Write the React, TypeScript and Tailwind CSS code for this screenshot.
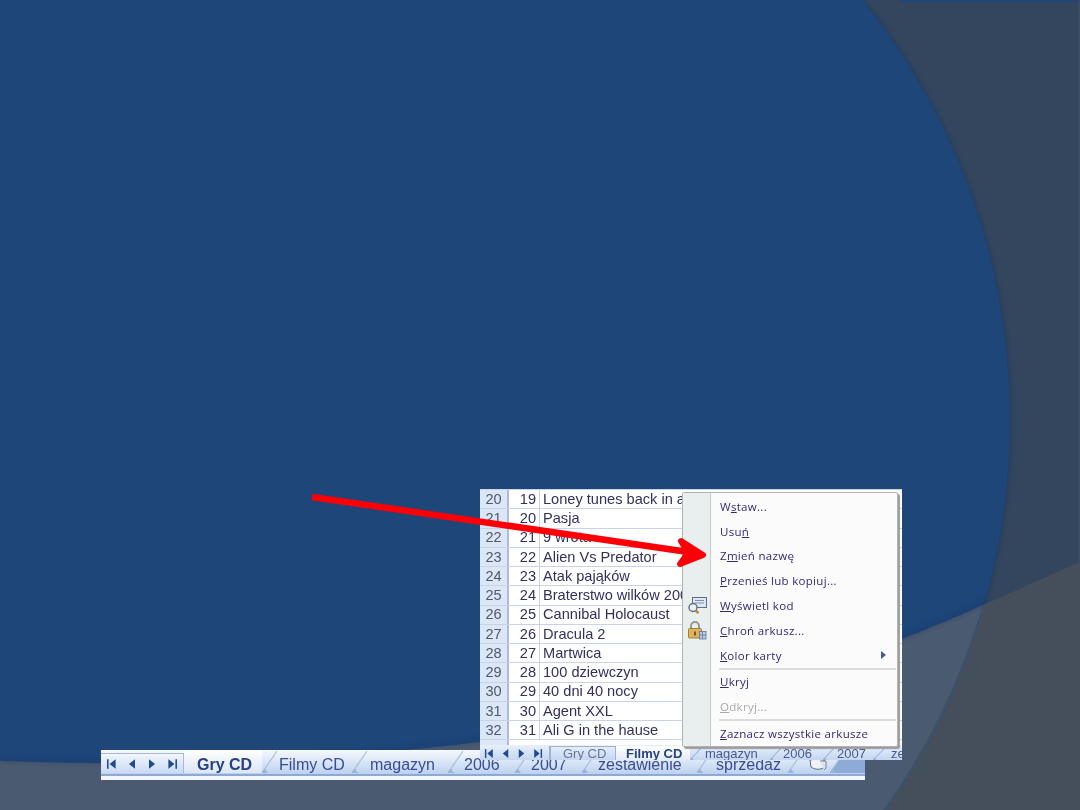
import type { ReactNode } from "react";

const rows: [number, number, string][] = [
  [20, 19, "Loney tunes back in action"],
  [21, 20, "Pasja"],
  [22, 21, "9 wrota"],
  [23, 22, "Alien Vs Predator"],
  [24, 23, "Atak pająków"],
  [25, 24, "Braterstwo wilków 2009"],
  [26, 25, "Cannibal Holocaust"],
  [27, 26, "Dracula 2"],
  [28, 27, "Martwica"],
  [29, 28, "100 dziewczyn"],
  [30, 29, "40 dni 40 nocy"],
  [31, 30, "Agent XXL"],
  [32, 31, "Ali G in the hause"],
];

function Nav({ size, gap }: { size: number; gap: string }) {
  const c = "#1f4a8c";
  return (
    <div className={`flex items-center ${gap}`}>
      <svg width={size} height={size} viewBox="0 0 10 10"><path d="M1.5 1v8" stroke={c} strokeWidth="1.3" /><path d="M8 1v8L3 5z" fill={c} /></svg>
      <svg width={size} height={size} viewBox="0 0 10 10"><path d="M7.5 1v8L2.5 5z" fill={c} /></svg>
      <svg width={size} height={size} viewBox="0 0 10 10"><path d="M2.5 1v8l5-4z" fill={c} /></svg>
      <svg width={size} height={size} viewBox="0 0 10 10"><path d="M8.5 1v8" stroke={c} strokeWidth="1.3" /><path d="M2 1v8l5-4z" fill={c} /></svg>
    </div>
  );
}

function Slant({ w, h, end }: { w: number; h: number; end?: boolean }) {
  const t = h * 0.2;
  return (
    <svg width={w} height={h} viewBox={`0 0 ${w} ${h}`} className="shrink-0">
      {end && <path d={`M0 ${h} L${w} 0 L${w} ${h} Z`} fill="#8eaad6" />}
      <path d={`M0 ${h} L${w} 1`} stroke="#a9bddd" strokeWidth="1.2" fill="none" />
      <path d={`M-1 ${h} L${t * 1.3} ${h} L${t * 0.6} ${h - t} Z`} fill="#9db3d8" />
    </svg>
  );
}

function Tab({ w, pl, children, cls }: { w: string; pl: string; children: ReactNode; cls?: string }) {
  return <div className={`${w} ${pl} ${cls ?? ""} flex items-center whitespace-nowrap shrink-0`}>{children}</div>;
}

function MenuItem({ pre, u, post, disabled, arrow, h }: { pre?: string; u: string; post?: string; disabled?: boolean; arrow?: boolean; h: string }) {
  return (
    <div className={`flex items-center justify-between pl-[37px] pr-[11px] ${h} ${disabled ? "text-[#a9a9ad]" : "text-[#33297a]"}`}>
      <span>{pre}<u>{u}</u>{post}</span>
      {arrow && <span className="w-0 h-0 border-y-[4px] border-y-transparent border-l-[5px] border-l-[#4a5a8a]" />}
    </div>
  );
}

export default function App() {
  return (
    <div className="relative w-[1080px] h-[810px] overflow-hidden bg-[#34465e] font-['Liberation_Sans',Arial,sans-serif]">
      <svg className="absolute inset-0" width="1080" height="810" viewBox="0 0 1080 810">
        <defs>
          <filter id="soft" x="-5%" y="-5%" width="110%" height="110%"><feGaussianBlur stdDeviation="2" /></filter>
          <clipPath id="lowClip"><path d="M0 761 C300 772 640 745 902 639 C960 617 1020 588 1080 562 L1080 810 L0 810 Z" /></clipPath>
          <clipPath id="circClip"><circle cx="338" cy="420" r="672" /></clipPath>
        </defs>
        <rect x="900" y="0" width="180" height="2" fill="#1f4679" />
        <rect x="1078" y="0" width="2" height="562" fill="#3a4c68" />
        <circle cx="338" cy="420" r="673" fill="#16365f" opacity="0.6" filter="url(#soft)" />
        <circle cx="338" cy="420" r="672" fill="#1e4679" />
        <g clipPath="url(#lowClip)">
          <rect x="0" y="540" width="1080" height="270" fill="#454f5c" />
          <circle cx="338" cy="420" r="672" fill="#4a5a70" />
          <circle cx="338" cy="420" r="672" fill="none" stroke="#3e5066" strokeWidth="3" />
        </g>
        <path d="M0 759 C300 770 640 743 902 637 C960 615 1020 586 1080 560" fill="none" stroke="#18396a" strokeWidth="3" opacity="0.55" filter="url(#soft)" clipPath="url(#circClip)" />
      </svg>

      {/* first picture: sheet tabs */}
      <div className="absolute left-[101px] top-[750px] w-[764px] h-[30px] flex flex-col bg-white text-[#3a4c92] text-[16px] leading-none blur-[0.3px]">
        <div className="h-[24px] flex items-stretch bg-gradient-to-b from-[#f6f9fe] to-[#bdd1ef] overflow-hidden pb-[1px]">
          <div className="w-[83px] pl-[5px] flex items-center border-r border-t border-[#a9bad6] mt-[3px] bg-gradient-to-b from-[#f2f6fd] to-[#c9daf3] shrink-0">
            <Nav size={12} gap="gap-[8px]" />
          </div>
          <Tab w="w-[78px]" pl="pl-[13px] pt-[6px]" cls="bg-gradient-to-b from-white to-[#dbe6f7] font-bold text-[#27407f]">Gry CD</Tab>
          <Slant w={15} h={23} />
          <Tab w="w-[75px]" pl="pl-[2px] pt-[6px]">Filmy CD</Tab>
          <Slant w={15} h={23} />
          <Tab w="w-[81px]" pl="pl-[3px] pt-[6px]">magazyn</Tab>
          <Slant w={15} h={23} />
          <Tab w="w-[52px]" pl="pl-[1px] pt-[6px]">2006</Tab>
          <Slant w={15} h={23} />
          <Tab w="w-[52px]" pl="pl-[1px] pt-[6px]">2007</Tab>
          <Slant w={15} h={23} />
          <Tab w="w-[100px]" pl="pl-[1px] pt-[6px]">zestawienie</Tab>
          <Slant w={15} h={23} />
          <Tab w="w-[76px]" pl="pl-[4px] pt-[6px]">sprzedaż</Tab>
          <Slant w={15} h={23} />
          <Tab w="w-[27px]" pl="pl-[5px] pt-[5px]">
            <svg width="20" height="18" viewBox="0 0 20 18">
              <path d="M2 5 C6 4 13 4 16 5 L17 12 C13 15 7 15 3 12z" fill="#eef2f8" stroke="#5a6a80" strokeWidth="1" />
              <path d="M12 6h6v7l-2 2" fill="#dde3ee" stroke="#5a6a80" strokeWidth="0.8" />
              <path d="M5 0l3 2 3-2-1 5H6z" fill="#e89a2c" />
            </svg>
          </Tab>
          <Slant w={15} h={23} end />
          <div className="flex-1 bg-[#8eaad6]" />
        </div>
        <div className="h-[2px] bg-[#8ea9d3]" />
        <div className="flex-1 bg-[#f3f6fb]" />
      </div>

      {/* second picture: sheet with context menu */}
      <div className="absolute left-[480px] top-[489px] w-[422px] h-[271px] bg-white overflow-hidden flex flex-col text-[14.6px] leading-none text-[#33305c] blur-[0.3px]">
        <div className="h-px bg-[#c7d3e8]" />
        {rows.map(([r, n, t]) => (
          <div key={r} className="h-[19.25px] flex border-b border-[#c7d3e8] shrink-0">
            <div className="w-[29px] flex items-center justify-center bg-[#dde6f4] border-r-2 border-[#a9bcd9] text-[#4a5a72] shrink-0">{r}</div>
            <div className="w-[31px] flex items-center justify-end pr-[3px] border-r border-[#c7d3e8] shrink-0">{n}</div>
            <div className="pl-[3px] flex items-center whitespace-nowrap">{t}</div>
          </div>
        ))}
        <div className="h-[5px] flex shrink-0">
          <div className="w-[29px] bg-[#dde6f4] border-r-2 border-[#a9bcd9]" />
        </div>
        <div className="flex-1 flex items-stretch bg-gradient-to-b from-[#e8f0fb] to-[#c4d6f1] text-[13px] text-[#4a5a8c] overflow-hidden pt-[1px]">
          <div className="w-[70px] pl-[4px] flex items-center border-r border-[#9fb2d0] shrink-0">
            <Nav size={11} gap="gap-[5px]" />
          </div>
          <Tab w="w-[66px]" pl="pl-[12px]" cls="border-x border-t border-[#9fb2d0] text-[#6a7690]">Gry CD</Tab>
          <Tab w="w-[74px]" pl="pl-[10px]" cls="bg-gradient-to-b from-white to-[#e4ecf8] font-bold text-[#27407f]">Filmy CD</Tab>
          <Slant w={12} h={14} />
          <Tab w="w-[68px]" pl="pl-[3px]">magazyn</Tab>
          <Slant w={12} h={14} />
          <Tab w="w-[41px]" pl="pl-[1px]">2006</Tab>
          <Slant w={12} h={14} />
          <Tab w="w-[38px]" pl="pl-[2px]">2007</Tab>
          <Slant w={13} h={14} />
          <Tab w="w-[16px]" pl="pl-[5px]">ze</Tab>
        </div>

        <div className="absolute left-[202px] top-[3px] w-[216px] h-[255px] flex bg-[#fbfbfb] border border-[#b0b2b4] rounded-[2px] shadow-[2px_2px_1px_#9a9c9e] font-['Open_Sans',sans-serif] text-[11.5px] tracking-[0.3px]">
          <div className="w-[28px] bg-[#e9eeee] border-r border-[#c5cbcb] shrink-0 flex flex-col items-center pt-[103px] gap-[7px]">
            <svg width="20" height="18" viewBox="0 0 20 18">
              <rect x="5.5" y="1.5" width="14" height="10" fill="#dfe6f0" stroke="#5a6f8c" />
              <path d="M8 4.5h9M8 7h9" stroke="#7e90a8" />
              <circle cx="6" cy="11.5" r="4" fill="#e8f0f8" stroke="#5e6f80" strokeWidth="1.4" />
              <path d="M8.5 14.5l3 2.5" stroke="#c08a30" strokeWidth="2.4" />
            </svg>
            <svg width="20" height="19" viewBox="0 0 20 19">
              <path d="M4 8V5a4 4 0 0 1 8 0v3" fill="none" stroke="#9a9a8c" strokeWidth="2" />
              <rect x="1.5" y="7.5" width="13" height="9.5" rx="1" fill="#e0b45c" stroke="#a57e30" />
              <rect x="7" y="10.5" width="2" height="4" fill="#7a5a20" />
              <rect x="12.5" y="10.5" width="6.5" height="7.5" fill="#b9c9df" stroke="#5f7698" strokeWidth="0.8" />
              <path d="M15.5 10.5v7.5M12.5 14h6.5" stroke="#5f7698" strokeWidth="0.7" />
            </svg>
          </div>
          <div className="flex-1 -ml-[28px] flex flex-col pt-[1px]">
            <MenuItem h="h-[24.85px]" pre="W" u="s" post="taw..." />
            <MenuItem h="h-[24.85px]" pre="Usu" u="ń" />
            <MenuItem h="h-[24.85px]" pre="Z" u="m" post="ień nazwę" />
            <MenuItem h="h-[24.85px]" u="P" post="rzenieś lub kopiuj..." />
            <MenuItem h="h-[24.85px]" u="W" post="yświetl kod" />
            <MenuItem h="h-[24.85px]" u="C" post="hroń arkusz..." />
            <MenuItem h="h-[24.85px]" u="K" post="olor karty" arrow />
            <div className="h-[2px] ml-[36px] mr-[1px] bg-[#dcdcdc] shrink-0" />
            <MenuItem h="h-[24px]" u="U" post="kryj" />
            <MenuItem h="h-[25px]" u="O" post="dkryj..." disabled />
            <div className="h-[2px] ml-[36px] mr-[1px] bg-[#dcdcdc] shrink-0" />
            <MenuItem h="h-[25px]" u="Z" post="aznacz wszystkie arkusze" />
          </div>
        </div>
      </div>

      {/* arrow */}
      <svg className="absolute inset-0 pointer-events-none" width="1080" height="810" viewBox="0 0 1080 810">
        <path d="M312 497 L695 553" stroke="#fb0006" strokeWidth="6.5" fill="none" />
        <path d="M681 541 L703 555 L680 564 L688 553 Z" fill="#fb0006" stroke="#fb0006" strokeWidth="6" strokeLinejoin="round" />
      </svg>
    </div>
  );
}
